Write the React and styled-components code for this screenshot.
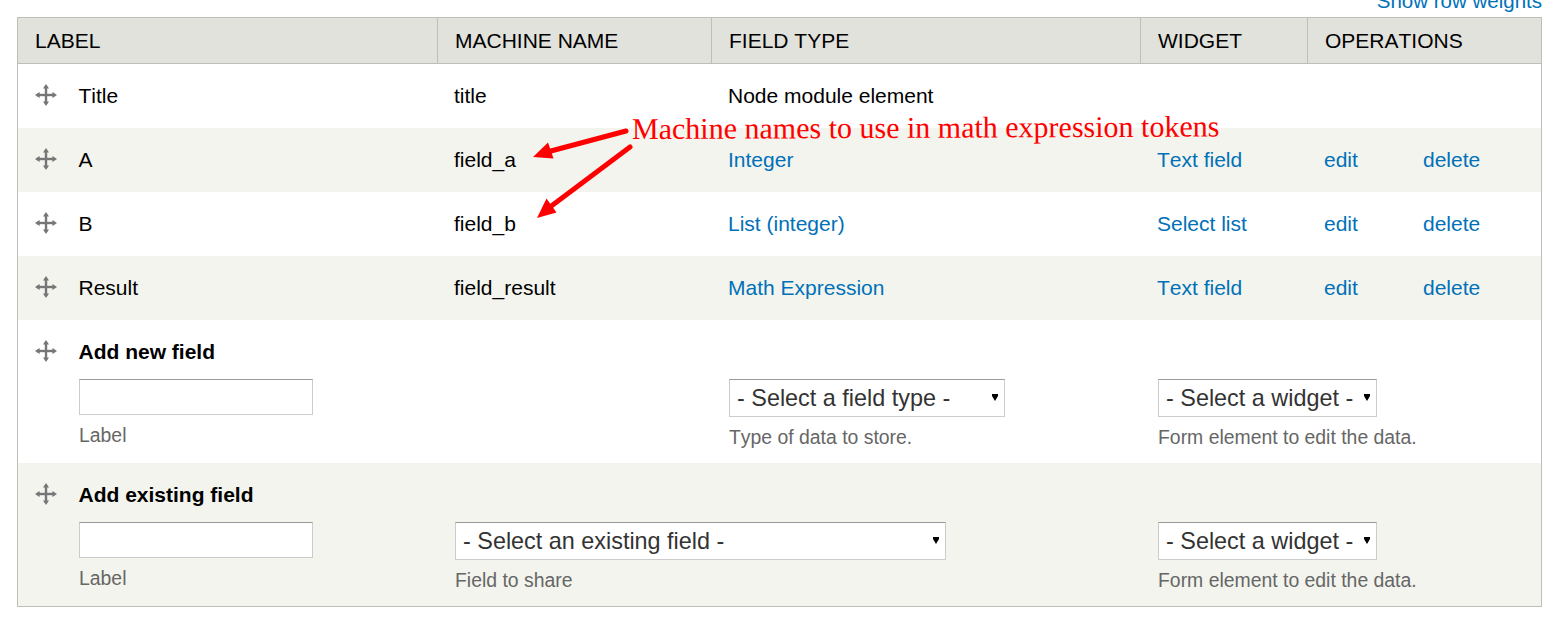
import React from 'react';
import styled, { createGlobalStyle } from 'styled-components';

const GlobalStyle = createGlobalStyle`
  html, body {
    margin: 0;
    padding: 0;
    background: #fff;
    font-family: "Liberation Sans", Arial, sans-serif;
    font-kerning: none;
    color: #000;
  }
`;

const Page = styled.div`
  position: relative;
  width: 1557px;
  height: 621px;
  overflow: hidden;
  padding: 0 15px 0 17px;
  box-sizing: border-box;
`;

const ToggleRow = styled.div`
  height: 17px;
  display: flex;
  justify-content: flex-end;
  align-items: flex-end;
  overflow: hidden;
`;

const Link = styled.a`
  color: #0071b8;
  text-decoration: none;
  cursor: pointer;
`;

const ToggleLink = styled(Link)`
  font-size: 20.5px;
  line-height: 23px;
  margin-bottom: 5px;
`;

const Table = styled.table`
  width: 1525px;
  table-layout: fixed;
  border-collapse: separate;
  border-spacing: 0;
  border: 1px solid #bebfb9;
  font-size: 21px;
`;

const HeadCell = styled.th`
  height: 45px;
  padding: 0 16px 0 17px;
  background: #e1e2dc;
  border-bottom: 1px solid #bebfb9;
  border-right: ${({ $last }) => ($last ? '0' : '1px solid #bebfb9')};
  text-align: left;
  font-weight: normal;
  font-size: 21px;
`;

const Row = styled.tr`
  background: ${({ $even }) => ($even ? '#f3f4ee' : '#fff')};
`;

const Cell = styled.td`
  height: 64px;
  padding: 0 16px;
  box-sizing: border-box;
`;

const LabelCell = styled(Cell)`
  padding: 0 0 0 17px;
`;

const AddCell = styled.td`
  height: 143px;
  box-sizing: border-box;
  vertical-align: top;
  padding: 59px 16px 0 16px;
`;

const AddLabelCell = styled.td`
  height: 143px;
  box-sizing: border-box;
  vertical-align: top;
  padding: 0 0 0 17px;
`;

const LabelWrap = styled.div`
  display: flex;
  align-items: center;
`;

const AddHead = styled.div`
  height: 63px;
  display: flex;
  align-items: center;
  font-weight: bold;
`;

const AddFields = styled.div`
  margin-left: 44px;
`;

const Handle = styled.svg`
  width: 24px;
  height: 24px;
  margin: -2px 20.5px 0 -1px;
  flex: none;
  filter: blur(0.6px);
`;

const Ops = styled.div`
  display: flex;
`;

const OpLink = styled(Link)`
  width: 99px;
`;

const TextInput = styled.input`
  display: block;
  width: 234px;
  height: 36px;
  margin: -4px 0 0 0;
  padding: 0;
  box-sizing: border-box;
  background: #fff;
  border: 1px solid #ccc;
  border-top-color: #999;
  border-radius: 0;
  outline: none;
`;

const Select = styled.select`
  display: block;
  width: ${({ $width }) => $width}px;
  height: 38px;
  margin-left: 1px;
  padding: 0 0 0 7px;
  box-sizing: border-box;
  appearance: none;
  background-color: #fff;
  background-image: url("data:image/svg+xml,%3Csvg xmlns='http://www.w3.org/2000/svg' width='6' height='7'%3E%3Cpath d='M0 0H6V2L3 7L0 2Z' fill='%23000'/%3E%3C/svg%3E");
  background-repeat: no-repeat;
  background-position: right 6px top 14px;
  color: #333;
  border: 1px solid #ccc;
  border-top-color: #999;
  border-radius: 0;
  font-family: "Liberation Sans", Arial, sans-serif;
  font-kerning: none;
  font-size: 23.4px;
`;

const Hint = styled.div`
  margin-top: 9px;
  margin-left: 1px;
  font-size: 19.4px;
  line-height: 23px;
  color: #666;
`;

const InputHint = styled(Hint)`
  margin-left: 0;
`;

const Note = styled.div`
  position: absolute;
  left: 632px;
  top: 110px;
  color: #f00;
  font-family: "Liberation Serif", "Times New Roman", serif;
  font-kerning: normal;
  font-size: 30px;
  line-height: 38px;
  white-space: nowrap;
  transform: rotate(-0.25deg);
  transform-origin: left center;
`;

const Arrows = styled.svg`
  position: absolute;
  left: 0;
  top: 0;
  width: 1557px;
  height: 621px;
  pointer-events: none;
`;

const DragHandle = () => (
  <Handle viewBox="0 0 24 24">
    <g fill="#767676">
      <rect x="10.8" y="3" width="2.4" height="18" />
      <rect x="3" y="10.8" width="18" height="2.4" />
      <path d="M12 1 L15 5.6 L9 5.6 Z" />
      <path d="M12 23 L15 18.4 L9 18.4 Z" />
      <path d="M1 12 L5.6 9 L5.6 15 Z" />
      <path d="M23 12 L18.4 9 L18.4 15 Z" />
    </g>
  </Handle>
);

const fields = [
  { label: 'A', name: 'field_a', type: 'Integer', widget: 'Text field' },
  { label: 'B', name: 'field_b', type: 'List (integer)', widget: 'Select list' },
  { label: 'Result', name: 'field_result', type: 'Math Expression', widget: 'Text field' },
];

const App = () => (
  <Page>
    <GlobalStyle />
    <ToggleRow>
      <ToggleLink>Show row weights</ToggleLink>
    </ToggleRow>
    <Table>
      <colgroup>
        <col style={{ width: 420 }} />
        <col style={{ width: 274 }} />
        <col style={{ width: 429 }} />
        <col style={{ width: 167 }} />
        <col style={{ width: 233 }} />
      </colgroup>
      <thead>
        <tr>
          <HeadCell>LABEL</HeadCell>
          <HeadCell>MACHINE NAME</HeadCell>
          <HeadCell>FIELD TYPE</HeadCell>
          <HeadCell>WIDGET</HeadCell>
          <HeadCell $last>OPERATIONS</HeadCell>
        </tr>
      </thead>
      <tbody>
        <Row>
          <LabelCell><LabelWrap><DragHandle />Title</LabelWrap></LabelCell>
          <Cell>title</Cell>
          <Cell>Node module element</Cell>
          <Cell />
          <Cell />
        </Row>
        {fields.map((field, i) => (
          <Row key={field.name} $even={i % 2 === 0}>
            <LabelCell><LabelWrap><DragHandle />{field.label}</LabelWrap></LabelCell>
            <Cell>{field.name}</Cell>
            <Cell><Link>{field.type}</Link></Cell>
            <Cell><Link>{field.widget}</Link></Cell>
            <Cell>
              <Ops>
                <OpLink>edit</OpLink>
                <OpLink>delete</OpLink>
              </Ops>
            </Cell>
          </Row>
        ))}
        <Row>
          <AddLabelCell>
            <AddHead><DragHandle />Add new field</AddHead>
            <AddFields>
              <TextInput type="text" />
              <InputHint>Label</InputHint>
            </AddFields>
          </AddLabelCell>
          <AddCell />
          <AddCell>
            <Select $width={276}><option>- Select a field type -</option></Select>
            <Hint>Type of data to store.</Hint>
          </AddCell>
          <AddCell colSpan={2}>
            <Select $width={219}><option>- Select a widget -</option></Select>
            <Hint>Form element to edit the data.</Hint>
          </AddCell>
        </Row>
        <Row $even>
          <AddLabelCell>
            <AddHead><DragHandle />Add existing field</AddHead>
            <AddFields>
              <TextInput type="text" />
              <InputHint>Label</InputHint>
            </AddFields>
          </AddLabelCell>
          <AddCell colSpan={2}>
            <Select $width={491}><option>- Select an existing field -</option></Select>
            <Hint>Field to share</Hint>
          </AddCell>
          <AddCell colSpan={2}>
            <Select $width={219}><option>- Select a widget -</option></Select>
            <Hint>Form element to edit the data.</Hint>
          </AddCell>
        </Row>
      </tbody>
    </Table>
    <Arrows viewBox="0 0 1557 621">
      <g stroke="#f00" strokeWidth="5" strokeLinecap="round">
        <line x1="626" y1="131" x2="549" y2="151.5" />
        <line x1="630" y1="147" x2="550" y2="207" />
      </g>
      <path d="M533 157 L548 142.5 L553.5 158.5 Z" fill="#f00" />
      <path d="M537 218 L546.5 198.5 L556.5 212.5 Z" fill="#f00" />
    </Arrows>
    <Note>Machine names to use in math expression tokens</Note>
  </Page>
);

export default App;
